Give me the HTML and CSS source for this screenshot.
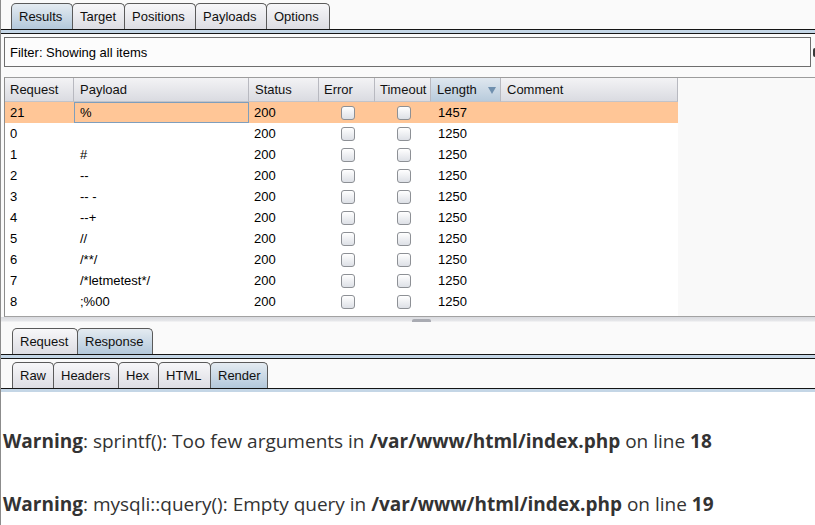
FILE: index.html
```html
<!DOCTYPE html>
<html>
<head>
<meta charset="utf-8">
<link rel="stylesheet" href="styles.css">
</head>
<body>
<div class="app">
  <div class="tabs top-tabs">
    <div class="tab sel">Results</div>
    <div class="tab">Target</div>
    <div class="tab">Positions</div>
    <div class="tab">Payloads</div>
    <div class="tab">Options</div>
  </div>
  <div class="tab-rule"></div>

  <div class="filter-row">
    <div class="filter">Filter: Showing all items</div>
    <div class="filter-edge"></div>
  </div>

  <div class="pane">
    <div class="grid">
      <div class="hrow">
        <div class="hc c1">Request</div>
        <div class="hc c2">Payload</div>
        <div class="hc c3">Status</div>
        <div class="hc c4">Error</div>
        <div class="hc c5">Timeout</div>
        <div class="hc c6 hsel">Length<svg class="sort" width="8" height="7" viewBox="0 0 8 7"><path d="M0 0H8L4 7Z" fill="#6f8fae"/></svg></div>
        <div class="hc c7">Comment</div>
      </div>
      <div class="row hl">
        <div class="dc c1">21</div><div class="dc c2 focus">%</div><div class="dc c3">200</div>
        <div class="dc c4 cb"><span class="box"></span></div><div class="dc c5 cb"><span class="box"></span></div>
        <div class="dc c6">1457</div><div class="dc c7"></div>
      </div>
      <div class="row">
        <div class="dc c1">0</div><div class="dc c2"></div><div class="dc c3">200</div>
        <div class="dc c4 cb"><span class="box"></span></div><div class="dc c5 cb"><span class="box"></span></div>
        <div class="dc c6">1250</div><div class="dc c7"></div>
      </div>
      <div class="row">
        <div class="dc c1">1</div><div class="dc c2">#</div><div class="dc c3">200</div>
        <div class="dc c4 cb"><span class="box"></span></div><div class="dc c5 cb"><span class="box"></span></div>
        <div class="dc c6">1250</div><div class="dc c7"></div>
      </div>
      <div class="row">
        <div class="dc c1">2</div><div class="dc c2">--</div><div class="dc c3">200</div>
        <div class="dc c4 cb"><span class="box"></span></div><div class="dc c5 cb"><span class="box"></span></div>
        <div class="dc c6">1250</div><div class="dc c7"></div>
      </div>
      <div class="row">
        <div class="dc c1">3</div><div class="dc c2">-- -</div><div class="dc c3">200</div>
        <div class="dc c4 cb"><span class="box"></span></div><div class="dc c5 cb"><span class="box"></span></div>
        <div class="dc c6">1250</div><div class="dc c7"></div>
      </div>
      <div class="row">
        <div class="dc c1">4</div><div class="dc c2">--+</div><div class="dc c3">200</div>
        <div class="dc c4 cb"><span class="box"></span></div><div class="dc c5 cb"><span class="box"></span></div>
        <div class="dc c6">1250</div><div class="dc c7"></div>
      </div>
      <div class="row">
        <div class="dc c1">5</div><div class="dc c2">//</div><div class="dc c3">200</div>
        <div class="dc c4 cb"><span class="box"></span></div><div class="dc c5 cb"><span class="box"></span></div>
        <div class="dc c6">1250</div><div class="dc c7"></div>
      </div>
      <div class="row">
        <div class="dc c1">6</div><div class="dc c2">/**/</div><div class="dc c3">200</div>
        <div class="dc c4 cb"><span class="box"></span></div><div class="dc c5 cb"><span class="box"></span></div>
        <div class="dc c6">1250</div><div class="dc c7"></div>
      </div>
      <div class="row">
        <div class="dc c1">7</div><div class="dc c2">/*letmetest*/</div><div class="dc c3">200</div>
        <div class="dc c4 cb"><span class="box"></span></div><div class="dc c5 cb"><span class="box"></span></div>
        <div class="dc c6">1250</div><div class="dc c7"></div>
      </div>
      <div class="row">
        <div class="dc c1">8</div><div class="dc c2">;%00</div><div class="dc c3">200</div>
        <div class="dc c4 cb"><span class="box"></span></div><div class="dc c5 cb"><span class="box"></span></div>
        <div class="dc c6">1250</div><div class="dc c7"></div>
      </div>
    </div>
    <div class="filler"></div>
  </div>

  <div class="splitter"><span class="handle"></span></div>

  <div class="tabs mid-tabs">
    <div class="tab">Request</div>
    <div class="tab sel">Response</div>
  </div>
  <div class="tab-rule"></div>

  <div class="tabs sub-tabs">
    <div class="tab">Raw</div>
    <div class="tab">Headers</div>
    <div class="tab">Hex</div>
    <div class="tab">HTML</div>
    <div class="tab sel">Render</div>
  </div>
  <div class="tab-rule open"></div>

  <div class="render">
    <p class="warn"><b>Warning</b>: sprintf(): Too few arguments in <b>/var/www/html/index.php</b> on line <b>18</b></p>
    <p class="warn"><b>Warning</b>: mysqli::query(): Empty query in <b>/var/www/html/index.php</b> on line <b>19</b></p>
  </div>
</div>
</body>
</html>
```

FILE: styles.css
```css
* { box-sizing: border-box; }
html, body { margin: 0; padding: 0; }
body {
  width: 815px;
  height: 525px;
  overflow: hidden;
  background: #fafafa;
  font-family: "Liberation Sans", Arial, sans-serif;
  font-size: 13px;
  color: #000;
}
.app {
  height: 525px;
  border-left: 1px solid #8c8c8c;
  display: flex;
  flex-direction: column;
}
.app > * { flex-shrink: 0; }

/* tabs */
.tabs {
  display: flex;
  padding-left: 10px;
  height: 26px;
  align-items: stretch;
}
.top-tabs { margin-top: 3px; }
.mid-tabs { margin-top: 1px; padding-left: 11px; }
.sub-tabs { margin-top: 3px; padding-left: 11px; }
.tab {
  border: 1px solid #5a5a5a;
  border-bottom: none;
  border-radius: 5px 5px 0 0;
  margin-right: -1px;
  padding: 0 7px;
  display: flex;
  align-items: center;
  background: linear-gradient(#f7f7f9, #dddde3);
  color: #101010;
  white-space: nowrap;
}
.tab.sel {
  background: linear-gradient(#e4ebf1, #b3c8db);
}
.top-tabs .tab:nth-child(1) { width: 62px; }
.top-tabs .tab:nth-child(2) { width: 53px; }
.top-tabs .tab:nth-child(3) { width: 72px; }
.top-tabs .tab:nth-child(4) { width: 72px; }
.top-tabs .tab:nth-child(5) { width: 64px; }
.mid-tabs .tab:nth-child(1) { width: 66px; }
.mid-tabs .tab:nth-child(2) { width: 76px; }
.sub-tabs .tab:nth-child(1) { width: 42px; }
.sub-tabs .tab:nth-child(2) { width: 66px; }
.sub-tabs .tab:nth-child(3) { width: 41px; }
.sub-tabs .tab:nth-child(4) { width: 53px; }
.sub-tabs .tab:nth-child(5) { width: 58px; }

.tab-rule {
  height: 5px;
  border-top: 1px solid #151515;
  border-bottom: 1px solid #151515;
  background: #c4d6e6;
}
.tab-rule.open {
  height: 4px;
  border-bottom: none;
}

/* filter */
.filter-row {
  display: flex;
  align-items: center;
  margin: 3px 0 0 3px;
  height: 30px;
}
.filter {
  flex: 1;
  height: 30px;
  border: 1px solid #6e6e6e;
  background: #fcfcfc;
  padding-left: 5px;
  display: flex;
  align-items: center;
}
.filter-edge {
  width: 2px;
  height: 9px;
  margin-left: 2px;
  background: #3a3a3a;
  border-radius: 2px 0 0 2px;
}

/* results pane */
.pane {
  margin: 10px 0 0 3px;
  height: 240px;
  border-top: 1px solid #9c9c9c;
  border-bottom: 1px solid #a2a2a2;
  border-left: 1px solid #8c8c8c;
  display: flex;
}
.grid {
  width: 673px;
  background: #fff;
  display: flex;
  flex-direction: column;
}
.filler { flex: 1; background: #f9f9f9; }
.hrow, .row { display: flex; flex-shrink: 0; }
.hrow { height: 24px; background: #f9f9f9; }
.hc {
  height: 24px;
  background: linear-gradient(#f3f3f5, #dadbe1);
  border-right: 1px solid #b8b9c0;
  border-bottom: 1px solid #c2c3c9;
  padding-left: 5px;
  display: flex;
  align-items: center;
  color: #111;
}
.hc.hsel {
  background: linear-gradient(#dfe7ef, #b8cbdc);
  position: relative;
}
.sort { position: absolute; right: 4px; top: 9px; }
.c1 { width: 69px; }
.c2 { width: 175px; }
.c3 { width: 70px; }
.c4 { width: 56px; }
.c5 { width: 56px; }
.c6 { width: 70px; }
.c7 { width: 177px; }
.hc.c2, .hc.c3, .hc.c6, .hc.c7 { padding-left: 6px; }

.row { height: 21px; }
.row.hl { background: #ffc697; }
.dc {
  height: 21px;
  padding-left: 5px;
  display: flex;
  align-items: center;
}
.dc.c2 { padding-left: 6px; }
.dc.c6 { padding-left: 7px; }
.dc.focus { border: 1px solid #7f9ebc; padding-left: 5px; }
.dc.cb { justify-content: center; padding-left: 2px; }
.box {
  width: 14px;
  height: 14px;
  border: 1px solid #8d9095;
  border-radius: 3px;
  background: linear-gradient(#ffffff, #dde0e6);
}

/* splitter */
.splitter {
  height: 10px;
  position: relative;
  background: linear-gradient(#d8d9de 0, #e6e7ea 4px, #fafafa 5px);
}
.handle {
  position: absolute;
  left: 411px;
  top: 2px;
  width: 19px;
  height: 3px;
  border-radius: 2px 2px 0 0;
  background: #a9abb2;
}

/* rendered response */
.render {
  flex: 1 1 auto;
  min-height: 0;
  overflow: hidden;
  background: #fff;
  padding: 36px 0 0 2px;
  font-family: "Open Sans", "Noto Sans", sans-serif;
  font-size: 19px;
  color: #333;
}
.warn {
  margin: 0 0 37px 0;
  line-height: 26px;
}
.warn b { font-weight: 700; }
```
